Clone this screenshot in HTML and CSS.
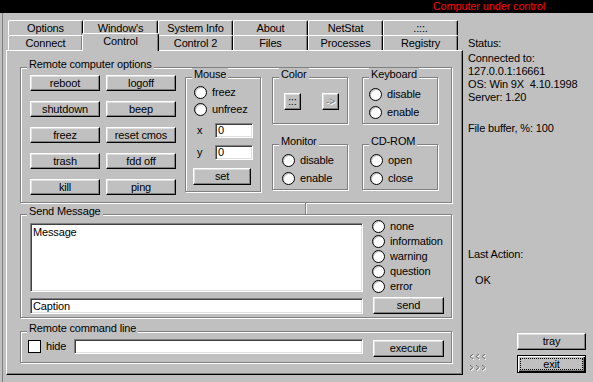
FILE: index.html
```html
<!DOCTYPE html>
<html lang="en">

<head>
    <meta charset="UTF-8">
    <title>Computer under control</title>
    <link rel="stylesheet" href="styles.css">
</head>

<body>
    <div class="titlebar">Computer under control</div>
    <div class="client">
        <div class="workspace">
            <div class="tabrow">
                <div class="tab">Options</div>
                <div class="tab">Window's</div>
                <div class="tab">System Info</div>
                <div class="tab">About</div>
                <div class="tab">NetStat</div>
                <div class="tab">.:::.</div>
            </div>
            <div class="tabrow">
                <div class="tab">Connect</div>
                <div class="tab active">Control</div>
                <div class="tab">Control 2</div>
                <div class="tab">Files</div>
                <div class="tab">Processes</div>
                <div class="tab">Registry</div>
            </div>
            <div class="page">
                <div class="group g-remote">
                    <div class="group-title">Remote computer options</div>
                    <div class="remote-body">
                        <div class="cmd-grid">
                            <button class="btn">reboot</button>
                            <button class="btn">logoff</button>
                            <button class="btn">shutdown</button>
                            <button class="btn">beep</button>
                            <button class="btn">freez</button>
                            <button class="btn">reset cmos</button>
                            <button class="btn">trash</button>
                            <button class="btn">fdd off</button>
                            <button class="btn">kill</button>
                            <button class="btn">ping</button>
                        </div>
                        <div class="group g-mouse">
                            <div class="group-title">Mouse</div>
                            <div class="mouse-body">
                                <div class="radio-row"><span class="radio"></span>freez</div>
                                <div class="radio-row"><span class="radio"></span>unfreez</div>
                                <div class="coord first"><span class="coord-label">x</span><span class="field small">0</span></div>
                                <div class="coord"><span class="coord-label">y</span><span class="field small">0</span></div>
                                <button class="btn set-btn">set</button>
                            </div>
                        </div>
                        <div class="mini-grid">
                            <div class="group">
                                <div class="group-title">Color</div>
                                <div class="color-body">
                                    <div class="btn sq">:::</div>
                                    <div class="btn sq disabled">-&gt;</div>
                                </div>
                            </div>
                            <div class="group">
                                <div class="group-title">Keyboard</div>
                                <div class="mini-body top">
                                    <div class="radio-row tall"><span class="radio"></span>disable</div>
                                    <div class="radio-row tall"><span class="radio"></span>enable</div>
                                </div>
                            </div>
                            <div class="group">
                                <div class="group-title">Monitor</div>
                                <div class="mini-body wide">
                                    <div class="radio-row tall"><span class="radio"></span>disable</div>
                                    <div class="radio-row tall"><span class="radio"></span>enable</div>
                                </div>
                            </div>
                            <div class="group">
                                <div class="group-title">CD-ROM</div>
                                <div class="mini-body">
                                    <div class="radio-row tall"><span class="radio"></span>open</div>
                                    <div class="radio-row tall"><span class="radio"></span>close</div>
                                </div>
                            </div>
                        </div>
                    </div>
                </div>

                <div class="splitter"><span class="split-line"></span></div>

                <div class="group g-send">
                    <div class="group-title">Send Message</div>
                    <div class="send-body">
                        <div class="send-left">
                            <textarea class="field message">Message</textarea>
                            <div class="field caption">Caption</div>
                        </div>
                        <div class="send-right">
                            <div class="radio-row short"><span class="radio"></span>none</div>
                            <div class="radio-row short"><span class="radio"></span>information</div>
                            <div class="radio-row short"><span class="radio"></span>warning</div>
                            <div class="radio-row short"><span class="radio"></span>question</div>
                            <div class="radio-row short"><span class="radio"></span>error</div>
                            <button class="btn wide-btn send-btn">send</button>
                        </div>
                    </div>
                </div>

                <div class="group g-cmd">
                    <div class="group-title">Remote command line</div>
                    <div class="cmd-body">
                        <span class="check"></span>
                        <span class="hide-label">hide</span>
                        <span class="field cmdline"></span>
                        <button class="btn wide-btn exec-btn">execute</button>
                    </div>
                </div>
            </div>
        </div>

        <div class="side">
            <div class="status">Status:</div>
            <div class="info">
                <div>Connected to:</div>
                <div>127.0.0.1:16661</div>
                <div>OS: Win 9X&nbsp; 4.10.1998</div>
                <div>Server: 1.20</div>
            </div>
            <div class="buffer">File buffer, %: 100</div>
            <div class="last">Last Action:</div>
            <div class="result">OK</div>

            <div class="side-bottom">
                <div class="arrows">
                    <svg width="19" height="7" viewBox="0 0 19 7">
                        <polyline points="5,1 2,3.5 5,6" fill="none" stroke="#fff"/>
                        <polyline points="11,1 8,3.5 11,6" fill="none" stroke="#fff"/>
                        <polyline points="17,1 14,3.5 17,6" fill="none" stroke="#fff"/>
                        <polyline points="4,0 1,2.5 4,5" fill="none" stroke="#6c6c6c"/>
                        <polyline points="10,0 7,2.5 10,5" fill="none" stroke="#6c6c6c"/>
                        <polyline points="16,0 13,2.5 16,5" fill="none" stroke="#6c6c6c"/>
                    </svg>
                    <svg width="19" height="7" viewBox="0 0 19 7">
                        <polyline points="2,1 5,3.5 2,6" fill="none" stroke="#fff"/>
                        <polyline points="8,1 11,3.5 8,6" fill="none" stroke="#fff"/>
                        <polyline points="14,1 17,3.5 14,6" fill="none" stroke="#fff"/>
                        <polyline points="1,0 4,2.5 1,5" fill="none" stroke="#6c6c6c"/>
                        <polyline points="7,0 10,2.5 7,5" fill="none" stroke="#6c6c6c"/>
                        <polyline points="13,0 16,2.5 13,5" fill="none" stroke="#6c6c6c"/>
                    </svg>
                </div>
                <div class="side-buttons">
                    <button class="btn side-btn">tray</button>
                    <button class="btn side-btn default"><span class="focus">exit</span></button>
                </div>
            </div>
        </div>
    </div>
</body>

</html>
```

FILE: styles.css
```css
* {
    box-sizing: border-box;
}

html,
body {
    margin: 0;
}

body {
    width: 593px;
    height: 382px;
    overflow: hidden;
    background-color: #c0c0c0;
    color: #000;
    font-family: "Liberation Sans", Arial, sans-serif;
    font-size: 11px;
    line-height: 13px;
    letter-spacing: -0.15px;
}

.titlebar {
    height: 13px;
    background-color: #000;
    color: #ff0000;
    text-align: right;
    padding-right: 48px;
    line-height: 13px;
}

.client {
    display: flex;
    height: 369px;
}

/* left part with the tabs */
.workspace {
    width: 461px;
    margin-left: 2px;
    border-left: 1px solid #808080;
    padding: 7px 0 0 3px;
}

.tabrow {
    display: flex;
    height: 15px;
    padding-left: 2px;
}

.tab {
    width: 75px;
    height: 15px;
    border: 1px solid;
    border-color: #fff #000 transparent #fff;
    border-bottom: none;
    border-radius: 2px 2px 0 0;
    box-shadow: inset -1px 0 #808080;
    background-color: #c0c0c0;
    text-align: center;
    padding-top: 1px;
    line-height: 13px;
}

.tab.active {
    position: relative;
    z-index: 1;
    width: 77px;
    height: 18px;
    margin: -2px -1px 0 -1px;
    padding-top: 1px;
}

.page {
    width: 457px;
    height: 325px;
    border: 1px solid;
    border-color: #fff #000 #000 #fff;
    box-shadow: inset -1px -1px #808080;
    padding: 16px 0 0 13px;
}

/* etched group box */
.group {
    border: 1px solid #808080;
    box-shadow: inset 1px 1px #fff, 1px 1px #fff;
}

.group-title {
    display: table;
    height: 13px;
    margin: -10px 0 0 6px;
    padding: 0 2px;
    background-color: #c0c0c0;
    line-height: 13px;
    white-space: nowrap;
}

.g-remote {
    width: 432px;
    height: 136px;
}

.remote-body {
    display: flex;
    align-items: flex-start;
    padding: 4px 0 0 9px;
}

.cmd-grid {
    display: grid;
    grid-template-columns: 70px 70px;
    grid-auto-rows: 16px;
    column-gap: 6px;
    row-gap: 10px;
}

.btn {
    display: block;
    margin: 0;
    padding: 0;
    border: 1px solid;
    border-color: #fff #000 #000 #fff;
    box-shadow: inset -1px -1px #808080, inset 1px 1px #dfdfdf;
    background-color: #c0c0c0;
    color: #000;
    font-family: inherit;
    font-size: 11px;
    letter-spacing: inherit;
    line-height: 13px;
    text-align: center;
    white-space: nowrap;
}

.g-mouse {
    width: 76px;
    height: 115px;
    margin: 2px 0 0 9px;
}

.mouse-body {
    padding: 3px 0 0 8px;
}

.radio-row {
    display: flex;
    align-items: center;
    height: 17px;
    white-space: nowrap;
}

.radio-row.tall {
    height: 18px;
}

.radio-row.short {
    height: 15px;
}

.radio {
    width: 13px;
    height: 13px;
    margin-right: 5px;
    border: 1px solid #000;
    border-radius: 50%;
    background-color: #fff;
    box-shadow: inset 1px 1px #c0c0c0;
    flex-shrink: 0;
}

.coord {
    display: flex;
    margin-top: 7px;
    height: 15px;
}

.coord.first {
    margin-top: 5px;
}

.coord-label {
    width: 21px;
    padding-left: 3px;
    line-height: 14px;
}

.field {
    display: block;
    border: 1px solid;
    border-color: #808080 #fff #fff #808080;
    box-shadow: inset 1px 1px #404040, inset -1px -1px #dfdfdf;
    background-color: #fff;
    color: #000;
    font-family: inherit;
    font-size: 11px;
    letter-spacing: inherit;
    line-height: 13px;
    padding: 0 2px;
}

.field.small {
    width: 38px;
    height: 15px;
}

.set-btn {
    width: 58px;
    height: 17px;
    margin: 8px 0 0 -1px;
}

.mini-grid {
    display: grid;
    grid-template-columns: 76px 76px;
    grid-template-rows: 47px 46px;
    column-gap: 14px;
    row-gap: 20px;
    margin: 2px 0 0 11px;
}

.color-body {
    display: flex;
    padding: 12px 0 0 11px;
}

.btn.sq {
    display: flex;
    align-items: center;
    justify-content: center;
    flex-shrink: 0;
    width: 17px;
    height: 17px;
    margin-right: 21px;
    font-size: 10px;
    letter-spacing: 0;
    line-height: 13px;
}

.btn.disabled {
    color: #808080;
    text-shadow: 1px 1px #fff;
}

.mini-body {
    padding: 3px 0 0 7px;
}

.mini-body.top {
    padding: 4px 0 0 6px;
}

.mini-body.wide {
    padding-left: 9px;
}

.splitter {
    height: 11px;
    padding-left: 285px;
}

.split-line {
    display: block;
    width: 2px;
    height: 11px;
    border-left: 1px solid #808080;
    border-right: 1px solid #fff;
}

.g-send {
    width: 432px;
    height: 104px;
}

.send-body {
    display: flex;
    padding-left: 9px;
}

.send-left {
    width: 333px;
}

.message {
    width: 333px;
    height: 69px;
    margin: 5px 0 0 0;
    padding: 2px 2px;
    resize: none;
    overflow: hidden;
    outline: none;
}

.caption {
    width: 333px;
    height: 16px;
    margin-top: 6px;
    padding-top: 1px;
}

.send-right {
    margin: 1px 0 0 9px;
}

.wide-btn {
    width: 71px;
    height: 17px;
}

.send-btn {
    margin: 3px 0 0 1px;
}

.g-cmd {
    width: 432px;
    height: 32px;
    margin-top: 13px;
}

.cmd-body {
    display: flex;
    align-items: flex-start;
    padding: 5px 0 0 7px;
}

.check {
    width: 13px;
    height: 13px;
    border: 1px solid #000;
    background-color: #fff;
}

.hide-label {
    width: 33px;
    padding-left: 5px;
    line-height: 13px;
}

.cmdline {
    width: 289px;
    height: 15px;
    margin-top: -1px;
}

.exec-btn {
    margin-left: 10px;
}

/* right status column */
.side {
    display: flex;
    flex-direction: column;
    width: 130px;
    padding: 24px 0 6px 5px;
}

.status {
    margin-bottom: 2px;
}

.buffer {
    margin-top: 18px;
}

.last {
    margin-top: 113px;
}

.result {
    margin-top: 13px;
    padding-left: 7px;
}

.side-bottom {
    display: flex;
    margin-top: auto;
}

.arrows {
    width: 19px;
    margin-left: 1px;
    padding-top: 21px;
}

.arrows svg {
    display: block;
    margin-bottom: 4px;
}

.side-buttons {
    margin-left: 29px;
}

.side-btn {
    width: 69px;
    height: 17px;
}

.side-btn.default {
    height: 18px;
    margin-top: 5px;
    border-color: #000;
    box-shadow: inset 1px 1px #fff, inset -1px -1px #000, inset -2px -2px #808080;
    padding: 2px;
}

.focus {
    display: block;
    height: 12px;
    border: 1px dotted #000;
    line-height: 10px;
}
```
